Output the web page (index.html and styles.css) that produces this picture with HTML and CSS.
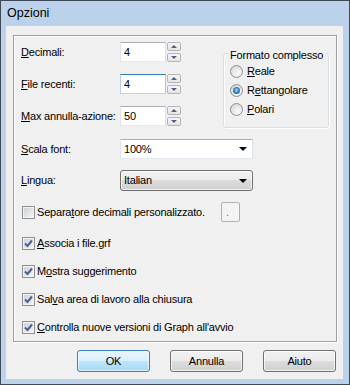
FILE: index.html
```html
<!DOCTYPE html>
<html lang="it">
<head>
<meta charset="utf-8">
<title>Opzioni</title>
<link rel="stylesheet" href="styles.css">
</head>
<body>
<div class="window">
  <div class="titlebar"><span class="title">Opzioni</span></div>
  <div class="client">
    <div class="panel">
      <div class="top">
        <div class="spins">
          <div class="row">
            <span class="lbl"><u>D</u>ecimali:</span>
            <span class="input">4</span>
            <span class="spin"><span class="sbtn"><span class="tri-up"></span></span><span class="sbtn"><span class="tri-down"></span></span></span>
          </div>
          <div class="row gap">
            <span class="lbl"><u>F</u>ile recenti:</span>
            <span class="input focus">4</span>
            <span class="spin"><span class="sbtn"><span class="tri-up"></span></span><span class="sbtn"><span class="tri-down"></span></span></span>
          </div>
          <div class="row gap">
            <span class="lbl"><u>M</u>ax annulla-azione:</span>
            <span class="input">50</span>
            <span class="spin"><span class="sbtn"><span class="tri-up"></span></span><span class="sbtn"><span class="tri-down"></span></span></span>
          </div>
        </div>
        <div class="group">
          <div class="group-title">Formato complesso</div>
          <div class="radio-row"><span class="radio"></span><span><u>R</u>eale</span></div>
          <div class="radio-row"><span class="radio on"></span><span>R<u>e</u>ttangolare</span></div>
          <div class="radio-row"><span class="radio"></span><span><u>P</u>olari</span></div>
        </div>
      </div>
      <div class="row combo-row">
        <span class="lbl"><u>S</u>cala font:</span>
        <span class="combo"><span>100%</span><span class="tri-black"></span></span>
      </div>
      <div class="row drop-row">
        <span class="lbl"><u>L</u>ingua:</span>
        <span class="drop"><span>Italian</span><span class="tri-black"></span></span>
      </div>
      <div class="check-row sep-row">
        <span class="check"></span>
        <span>Separa<u>t</u>ore decimali personalizzato.</span>
        <span class="dot-box">.</span>
      </div>
      <div class="check-row first">
        <span class="check"><svg viewBox="0 0 11 11" width="11" height="11"><path d="M2 5.5 L4.5 8 L9 2.5" fill="none" stroke="#4a5f97" stroke-width="2"/></svg></span>
        <span><u>A</u>ssocia i file.grf</span>
      </div>
      <div class="check-row">
        <span class="check"><svg viewBox="0 0 11 11" width="11" height="11"><path d="M2 5.5 L4.5 8 L9 2.5" fill="none" stroke="#4a5f97" stroke-width="2"/></svg></span>
        <span>M<u>o</u>stra suggerimento</span>
      </div>
      <div class="check-row">
        <span class="check"><svg viewBox="0 0 11 11" width="11" height="11"><path d="M2 5.5 L4.5 8 L9 2.5" fill="none" stroke="#4a5f97" stroke-width="2"/></svg></span>
        <span>Sal<u>v</u>a area di lavoro alla chiusura</span>
      </div>
      <div class="check-row">
        <span class="check"><svg viewBox="0 0 11 11" width="11" height="11"><path d="M2 5.5 L4.5 8 L9 2.5" fill="none" stroke="#4a5f97" stroke-width="2"/></svg></span>
        <span><u>C</u>ontrolla nuove versioni di Graph all'avvio</span>
      </div>
    </div>
    <div class="buttons">
      <span class="btn default">OK</span>
      <span class="btn">Annulla</span>
      <span class="btn">Aiuto</span>
    </div>
  </div>
</div>
</body>
</html>
```
FILE: styles.css
```css
html, body {
  margin: 0;
  padding: 0;
}
body {
  font-family: "Liberation Sans", Arial, sans-serif;
  font-size: 11px;
  letter-spacing: -0.2px;
  color: #000;
  line-height: 13px;
}
.window {
  width: 350px;
  height: 385px;
  box-sizing: border-box;
  border: 1px solid #3d4a58;
  background: #bcd2ea;
  padding: 0 6px 5px 5px;
  display: flex;
  flex-direction: column;
}
.titlebar {
  height: 25px;
  display: flex;
  align-items: center;
  padding-left: 1px;
  flex-shrink: 0;
}
.title {
  font-size: 12.5px;
  letter-spacing: 0;
}
.client {
  background: #f0f0f0;
  height: 353px;
  box-sizing: border-box;
  padding: 9px 6px 7px 7px;
  display: flex;
  flex-direction: column;
}
.panel {
  height: 307px;
  box-sizing: border-box;
  border: 1px solid #a0a0a0;
  box-shadow: 1px 1px 0 #fff, inset 1px 1px 0 #fff;
  padding: 6px 7px 6px 7px;
  display: flex;
  flex-direction: column;
}
.top {
  display: flex;
  align-items: flex-start;
}
.spins {
  display: flex;
  flex-direction: column;
}
.row {
  display: flex;
  align-items: center;
  height: 20px;
}
.row.gap {
  margin-top: 12px;
}
.lbl {
  width: 99px;
  flex-shrink: 0;
}
.input {
  width: 46px;
  height: 20px;
  box-sizing: border-box;
  background: #fff;
  border: 1px solid;
  border-color: #abadb3 #dbdfe6 #e3e9ef #e2e3ea;
  padding-left: 3px;
  display: flex;
  align-items: center;
}
.input.focus {
  border-color: #3d7bad #a4c9e3 #b7d9ed #b5cfe7;
}
.spin {
  display: flex;
  flex-direction: column;
  justify-content: space-between;
  height: 20px;
  margin-left: 1px;
}
.sbtn {
  width: 14px;
  height: 9px;
  box-sizing: border-box;
  border: 1px solid #b5b5b5;
  border-radius: 2px;
  background: linear-gradient(#f7f7f7, #e4e4e4);
  display: flex;
  align-items: center;
  justify-content: center;
}
.tri-up {
  width: 0;
  height: 0;
  border-left: 3px solid transparent;
  border-right: 3px solid transparent;
  border-bottom: 3px solid #4d6185;
}
.tri-down {
  width: 0;
  height: 0;
  border-left: 3px solid transparent;
  border-right: 3px solid transparent;
  border-top: 3px solid #4d6185;
}
.group {
  margin-left: auto;
  margin-top: 11px;
  width: 106px;
  height: 75px;
  box-sizing: border-box;
  border: 1px solid #d5dfe5;
  border-radius: 3px;
  box-shadow: inset 1px 1px 0 #fff, 1px 1px 0 #fff;
  padding: 0 0 8px 6px;
  display: flex;
  flex-direction: column;
}
.group-title {
  align-self: flex-start;
  margin-top: -5px;
  margin-left: -2px;
  padding: 0 2px;
  background: #f0f0f0;
  height: 13px;
}
.radio-row {
  display: flex;
  align-items: center;
  height: 19px;
  gap: 4px;
}
.radio {
  width: 13px;
  height: 13px;
  box-sizing: border-box;
  border-radius: 50%;
  border: 1px solid #8e8f8f;
  background: radial-gradient(circle at 65% 70%, #fbfbfb 0%, #e4e4e4 55%, #cfcfcf 100%);
  display: flex;
  align-items: center;
  justify-content: center;
}
.radio.on::after {
  content: "";
  width: 7px;
  height: 7px;
  border-radius: 50%;
  background: radial-gradient(circle at 50% 45%, #a8dcfb 0%, #3a8bd0 45%, #124a86 100%);
}
.combo-row {
  margin-top: 11px;
}
.combo {
  width: 133px;
  height: 20px;
  box-sizing: border-box;
  background: #fff;
  border: 1px solid;
  border-color: #abadb3 #dbdfe6 #e3e9ef #e2e3ea;
  padding: 0 5px 0 3px;
  display: flex;
  align-items: center;
  justify-content: space-between;
}
.drop-row {
  margin-top: 11px;
  height: 21px;
}
.drop {
  width: 133px;
  height: 21px;
  box-sizing: border-box;
  border: 1px solid #707070;
  border-radius: 3px;
  background: linear-gradient(#f2f2f2 0%, #ebebeb 50%, #dddddd 50%, #cfcfcf 100%);
  box-shadow: inset 0 0 0 1px rgba(255,255,255,0.7);
  padding: 0 5px 0 3px;
  display: flex;
  align-items: center;
  justify-content: space-between;
}
.tri-black {
  width: 0;
  height: 0;
  border-left: 4px solid transparent;
  border-right: 4px solid transparent;
  border-top: 4px solid #000;
}
.check-row {
  display: flex;
  align-items: center;
  height: 16px;
  margin-top: 12px;
  padding-left: 1px;
  gap: 2px;
}
.check-row.sep-row {
  height: 20px;
  margin-top: 11px;
}
.check-row.first {
  margin-top: 13px;
}
.check {
  width: 13px;
  height: 13px;
  box-sizing: border-box;
  border: 1px solid #8e8f8f;
  box-shadow: inset 0 0 0 1px #f4f4f4;
  background: linear-gradient(135deg, #cbcfd5 0%, #f6f6f6 100%);
  display: flex;
  align-items: center;
  justify-content: center;
  flex-shrink: 0;
}
.dot-box {
  margin-left: 14px;
  width: 19px;
  height: 20px;
  box-sizing: border-box;
  border: 1px solid #adb2b5;
  border-radius: 2px;
  background: #f4f4f4;
  color: #6d6da0;
  display: flex;
  align-items: center;
  justify-content: flex-start;
  padding-left: 4px;
}
.buttons {
  margin-top: 8px;
  display: flex;
  justify-content: flex-end;
  gap: 20px;
  padding-right: 1px;
}
.btn {
  width: 73px;
  height: 22px;
  box-sizing: border-box;
  border: 1px solid #707070;
  border-radius: 3px;
  background: linear-gradient(#f2f2f2 0%, #ebebeb 50%, #dddddd 50%, #cfcfcf 100%);
  box-shadow: inset 0 0 0 1px rgba(255,255,255,0.7);
  display: flex;
  align-items: center;
  justify-content: center;
}
.btn.default {
  border-color: #3c7fb1;
  background: linear-gradient(#eaf6fd 0%, #d9f0fc 50%, #bee6fd 50%, #a7d9f5 100%);
  box-shadow: inset 0 0 0 1px rgba(255,255,255,0.6);
}
```
